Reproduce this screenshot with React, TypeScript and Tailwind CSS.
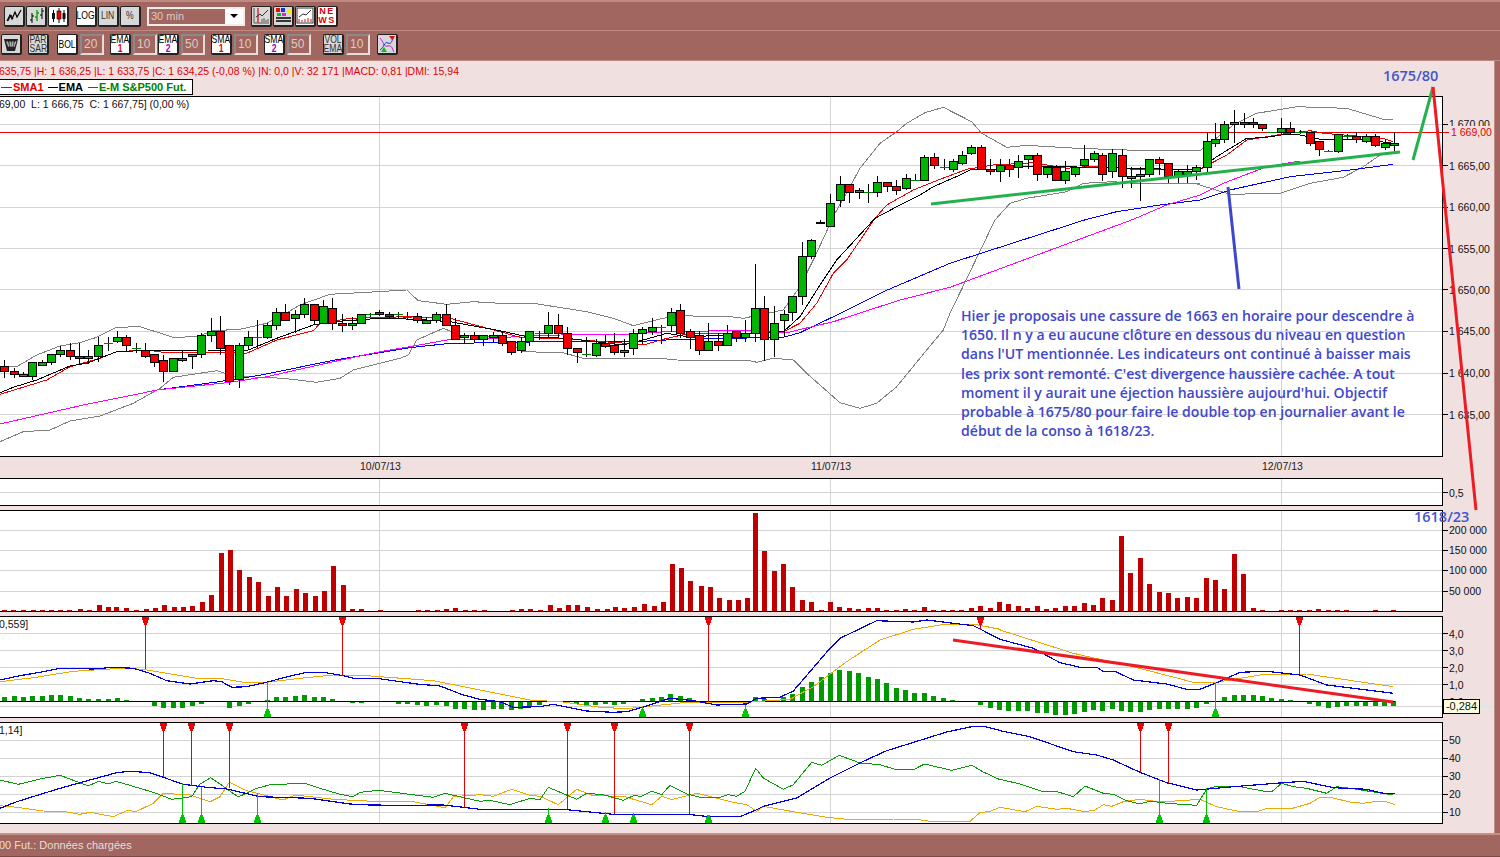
import React from "react";

type N = number[];
const pts = (a: N, xo: number, yo: number, sx = 3, sy = 3) => {
  const out: string[] = [];
  for (let i = 0; i < a.length; i += 2) out.push(`${(xo + a[i] / sx).toFixed(1)},${(yo + a[i + 1] / sy).toFixed(1)}`);
  return out.join(" ");
};
const join = (...s: string[]) => s.join(" ");

// candle data: zoom-x, body top, body bottom, high, low, green(1)/red(0)
const c3: N[] = [[13,259,274,240,293,0],[41,274,281,265,293,0],[69,281,287,275,292,1],[97,247,287,247,300,1],[125,247,254,240,254,1],[153,223,247,223,254,1],[181,211,223,197,231,1],[209,211,229,190,240,0],[237,229,235,188,253,0],[265,229,235,211,253,1],[295,196,229,170,247,1],[323,190,190,170,212,1],[350,172,184,153,190,1],[378,172,196,165,215,0],[407,205,205,190,218,1],[435,211,229,190,235,0],[463,223,247,223,260,0],[490,241,274,225,305,0],[520,235,274,235,274,1],[547,235,241,211,247,1],[575,223,229,223,266,1],[604,166,223,160,235,1],[632,154,166,115,185,1],[660,154,205,108,225,0],[688,196,304,196,316,0],[716,196,298,190,323,1],[745,172,196,153,207,1],[772,172,172,120,205,1],[802,136,172,130,178,1],[829,97,136,85,150,1],[856,97,121,72,121,0],[885,103,115,90,160,1],[913,73,103,55,115,1],[943,73,121,73,136,0],[970,79,130,61,133,1],[997,85,130,55,150,0],[1027,130,136,102,155,0],[1055,130,136,112,150,1],[1082,103,130,103,130,1],[1110,103,103,100,112,1],[1138,97,103,90,108,0],[1167,103,108,97,115,0],[1195,103,103,97,117,1],[1222,110,110,97,118,1],[1252,109,121,99,130,0],[1279,121,130,110,130,1],[1308,103,121,97,130,1],[1337,103,136,73,136,0],[1364,136,178,115,178,0],[1393,166,172,160,190,1],[1421,166,178,155,190,0],[1450,166,178,166,197,1],[1478,166,172,155,185,1]];
const c4: N[] = [[6,226,250,215,258,0],[34,244,277,244,285,0],[62,244,271,230,278,1],[88,214,244,214,258,1],[117,220,220,214,240,1],[145,196,220,156,234,1],[175,196,220,163,234,0],[202,220,265,202,285,0],[230,265,277,265,308,0],[259,283,283,232,292,1],[287,250,284,238,292,1],[315,250,257,226,265,0],[343,256,277,220,285,0],[371,271,277,238,291,1],[400,220,265,208,285,1],[427,208,220,202,252,1],[456,202,214,175,225,1],[484,202,202,196,252,1],[512,157,196,144,215,1],[541,151,220,132,235,0],[569,214,232,208,266,0],[598,226,271,214,285,0],[625,244,271,190,271,1],[653,244,256,220,272,0],[682,220,256,196,256,1],[709,214,232,214,245,0],[736,220,232,180,245,1],[766,145,220,12,245,1],[793,145,238,108,302,0],[823,190,238,139,292,1],[851,163,181,150,232,1],[877,109,157,109,183,1],[907,-12,109,-55,135,1],[934,-60,-12,-64,-3,1],[961,-114,-111,-120,-108,0],[990,-171,-102,-198,-102,1]];
const c5: N[] = [[119,283,331,258,350,1],[148,283,307,283,338,0],[176,301,307,295,326,1],[205,307,307,283,338,1],[232,277,307,258,320,1],[260,277,289,277,307,0],[289,289,301,271,314,0],[317,265,295,252,301,1],[345,271,271,252,271,1],[373,202,271,196,271,1],[401,202,226,190,238,0],[431,232,232,208,240,1],[458,214,238,208,245,1],[485,196,220,183,226,1],[514,172,190,166,196,1],[542,172,238,165,238,0],[571,238,244,208,255,0],[599,226,244,208,277,1],[627,226,238,208,260,0],[655,214,232,196,265,1],[683,196,208,196,238,1],[712,196,253,190,272,0],[740,232,253,232,265,1],[767,232,271,226,271,0],[796,244,271,214,283,1],[824,232,253,232,260,1],[853,208,226,166,232,1],[881,190,208,183,215,1],[907,196,253,190,272,0],[937,190,244,178,265,1],[965,196,259,178,295,0],[992,259,265,232,295,1],[1021,253,259,232,332,1],[1048,208,253,208,260,1],[1077,208,220,200,255,0],[1105,220,259,220,280,0],[1133,244,259,238,280,1],[1161,244,253,225,280,1],[1189,232,244,225,270,1]];
const c2: N[] = [[170,244,322,216,335,1],[196,238,250,190,262,1],[223,193,238,183,250,1],[253,187,193,150,250,1],[281,187,193,160,205,0],[310,187,193,175,205,0],[337,193,205,193,212,0],[367,217,217,217,217,1],[394,205,217,175,225,1],[421,205,217,187,225,0],[450,217,217,210,222,1],[479,217,250,217,257,0],[506,244,268,244,288,0],[535,274,274,270,276,1],[563,223,274,223,280,1],[591,229,229,223,238,1],[619,229,238,217,250,0],[647,229,244,223,250,1],[676,229,256,223,262,0],[704,250,262,238,270,1],[731,250,256,215,274,1]];

const toCandles = (a: N[], xo: number, yo: number) =>
  a.map(([x, t, b, h, l, g]) => ({ x: Math.round(xo + x / 3), t: Math.round(yo + t / 3) + 0.5, b: Math.round(yo + b / 3) + 0.5, h: yo + h / 3, l: yo + l / 3, g }));
const candles = [...toCandles(c3, 0, 280), ...toCandles(c4, 500, 260), ...toCandles(c5, 800, 90), ...toCandles(c2, 1150, 60)];

const bbU = join(
  pts([0,262,50,260,110,225,180,198,240,188,290,172,350,142,420,140,520,172,590,170,640,152,720,148,800,130,850,105,900,75,990,43,1100,37,1220,30,1255,62,1340,73,1420,65,1500,70], 0, 280),
  pts([100,130,260,155,340,175,400,197,490,175,530,167,690,170,730,175,850,150,900,80,940,0], 500, 260),
  pts([105,370,150,290,180,235,240,160,290,125,320,100,375,68,430,52,515,95,545,130,620,172,680,166,830,175,1070,183,1200,182], 800, 90),
  pts([250,195,320,160,440,140,590,145,700,178,730,178], 1150, 60));
const bbL = join(
  pts([0,485,70,455,150,450,210,423,300,408,400,370,480,325,520,292,650,272,700,288,850,295,950,307,1020,295,1060,270,1200,235,1225,225,1250,180,1330,145,1380,165,1500,170], 0, 280),
  pts([70,275,190,278,250,295,480,295,530,300,750,302,770,307,820,295,880,300,920,340,1020,428,1080,445,1130,430,1190,380,1280,270,1330,210,1350,160], 500, 260),
  pts([585,390,630,340,680,325,800,305,850,280,940,275,1000,280,1200,280], 800, 90),
  pts([140,372,240,403,390,400,480,370,580,352,640,320,690,285,730,280], 1150, 60));
const sma = join(
  pts([0,343,140,300,210,260,300,235,350,215,440,210,490,217,640,217,740,220,830,180,940,152,960,130,1050,115,1220,110,1350,115,1500,155], 0, 280),
  pts([60,232,220,238,310,245,380,250,430,255,490,238,560,222,740,220,850,215,900,190,950,130,1000,40,1040,0], 500, 260),
  pts([225,385,260,345,340,300,420,268,500,238,580,225,700,218,800,235,880,228,1000,238,1200,238], 800, 90),
  pts([230,285,290,240,400,222,480,212,520,220,700,235,730,245], 1150, 60));
const ema = join(
  pts([0,338,40,322,110,300,210,258,260,250,350,215,400,213,620,210,740,212,830,175,940,135,1000,125,1140,115,1250,118,1350,125,1500,152], 0, 280),
  pts([80,230,200,235,370,255,430,240,500,220,560,230,700,225,850,215,900,170,960,75,1010,0], 500, 260),
  pts([225,385,300,345,360,315,400,290,480,255,515,238,580,238,700,228,1000,235,1200,240], 800, 90),
  pts([160,320,200,290,290,235,340,233,400,224,450,225,520,240,630,238,730,250], 1150, 60));
const magenta = join(
  pts([0,432,250,375,400,345,470,330,680,308,800,290,1000,245,1140,215,1230,200,1340,180,1500,175], 0, 280),
  pts([60,228,220,224,390,222,520,214,740,212,860,218,1000,185,1200,120,1350,82], 500, 260),
  pts([1000,388,1100,345,1200,315], 800, 90),
  pts([220,370,350,320,450,303], 1150, 60));
const blue = join(
  pts([0,432,250,375,400,345,470,330,650,306,780,286,1000,241,1230,203,1350,190,1500,188], 0, 280),
  pts([130,245,400,245,540,238,850,232,900,218,1000,170,1150,95,1350,10], 500, 260),
  pts([860,388,950,365,1080,345,1200,330], 800, 90),
  pts([240,390,420,350,600,330,730,313], 1150, 60));

const macdB = join(
  pts([0,210,60,197,120,187,180,175,280,177,340,172,400,175,450,190,500,212,570,222,640,212,665,215,695,232,740,230,800,217,850,203,920,187,970,187,1030,197,1060,205,1130,205,1250,222,1320,228,1390,255], 0, 610),
  pts([0,268,60,275,100,292,180,290,220,283,320,303,400,307,440,305,500,288,570,265,640,272,710,285,800,282,830,265,900,262,940,243,1050,115,1080,85,1190,32,1300,36,1340,30,1480,47,1510,62], 480, 610),
  pts([0,88,100,115,180,158,240,172,290,172,310,184,345,184,400,210,500,222,560,238,600,238,650,218,720,187,800,184,900,195,980,225,1180,250], 1000, 610));
const macdY = join(
  pts([0,215,100,203,220,184,380,174,440,180,590,205,660,205,730,217,800,217,900,205,1000,195,1100,197,1300,212], 0, 610),
  pts([0,240,150,270,250,276,360,292,440,296,620,277,800,277,930,268,1000,230,1100,155,1200,90,1300,58,1400,42,1480,42,1560,58], 480, 610),
  pts([0,60,220,130,400,170,580,217,650,217,780,195,920,192,1180,230], 1000, 610));

const dmiB = join(
  pts([0,595,50,575,180,535,270,510,350,488,390,484,450,488,550,523,620,532,680,537,780,560,930,565,1050,582,1110,585,1200,586,1330,585,1390,592,1440,598], 0, 610),
  pts([0,274,250,274,340,283,400,289,620,289,690,296,780,296,830,275,850,265,950,240,1050,180,1150,130,1220,98,1400,42,1480,25,1510,25,1560,37], 480, 718),
  pts([0,362,90,380,220,425,290,435,340,450,420,487,500,518,590,540,700,530,850,518,910,514,1000,533,1100,538,1150,550,1185,550], 1000, 610));
const dmiG = join(
  pts([0,510,55,523,120,507,180,496,265,528,295,514,325,522,348,514,460,547,515,568,575,560,600,522,632,503,660,522,715,561,770,535,820,522,860,522,915,520,960,535,1020,553,1060,560,1080,547,1135,541,1300,562,1335,550,1400,565], 0, 610),
  pts([0,250,30,247,90,260,150,241,180,245,205,208,290,244,320,226,370,230,430,247,460,233,485,235,515,220,545,230,570,202,620,228,660,238,720,238,745,230,770,235,795,220,827,151,850,180,910,214,940,200,995,133,1025,142,1078,112,1140,135,1200,140,1245,154,1303,154,1333,138,1415,157,1475,142,1510,162,1560,185], 480, 718),
  pts([0,508,60,522,130,545,165,543,220,560,255,528,310,550,340,553,380,572,420,582,450,573,500,580,590,586,620,537,645,530,720,530,800,545,815,545,845,520,880,530,920,535,980,550,1010,530,1050,535,1180,555], 1000, 610));
const dmiY = join(
  pts([0,587,50,592,130,603,190,604,240,613,270,607,340,620,380,602,410,604,460,580,490,550,570,555,630,575,660,560,688,517,740,542,850,570,885,555,1000,568,1140,575,1240,575,1335,593,1360,560], 0, 610),
  pts([0,230,40,235,95,214,150,232,180,235,235,260,290,214,340,233,430,235,515,260,545,235,575,245,650,226,760,253,800,260,830,280,850,265,950,283,1040,298,1100,304,1180,306,1240,303,1310,304,1350,310,1470,310,1500,284,1530,280,1560,268], 480, 718),
  pts([0,592,75,605,110,589,170,598,200,595,255,605,285,600,310,584,335,589,370,575,420,568,480,576,600,568,650,590,720,605,770,605,800,595,870,597,930,580,960,562,990,562,1050,576,1090,580,1130,574,1155,574,1185,584], 1000, 610));

// volume [x px, top px]
const v8 = [9,315,28,315,47,315,68,315,87,315,107,315,126,315,145,315,166,312,185,315,206,300,225,306,243,306,264,309,284,315,304,312,323,309,342,300,363,306,381,306,400,303,421,291,440,270,461,144,480,135,498,195,519,216,538,231,559,273,578,246,597,273,618,252,637,264,657,273,676,258,695,183,716,240,735,312,753,312,793,315,873,315,891,315,912,315,931,312,950,309,971,315,990,315,1011,315,1069,315,1088,312,1107,312,1128,315,1147,300,1167,309,1186,300,1205,300,1226,306,1245,312,1266,312,1284,306,1303,309,1324,306,1343,297,1364,303,1383,291,1402,177,1422,189,1441,228,1462,243,1481,246,1500,279,1521,285,1540,285,1559,279];
const v9 = [46,24,73,138,103,198,130,177,157,246,187,285,214,291,244,315,271,291,298,306,328,309,355,312,385,309,412,309,439,315,469,315,496,312,523,315,553,306,580,315,610,315,637,315,664,315,694,309,721,303,751,309,778,291,805,297,835,303,862,309,892,303,919,312,946,309,976,303,1003,303,1033,294,1060,300,1087,279,1117,285,1144,93,1171,204,1201,159,1228,237,1258,261,1285,264,1312,279,1342,276,1369,279,1399,219,1426,225,1453,252,1483,147];
const v7 = [430,312,460,414,487,420,544,420,571,420,598,420,628,420,655,417,685,420,712,420,739,420,826,420,880,420];
const vols: { x: number; t: number }[] = [];
for (let i = 0; i < v8.length; i += 2) vols.push({ x: v8[i] / 2.087, t: 505 + v8[i + 1] / 3 });
for (let i = 0; i < v9.length; i += 2) vols.push({ x: 740 + v9[i] / 3, t: 505 + v9[i + 1] / 3 });
for (let i = 0; i < v7.length; i += 2) vols.push({ x: 1100 + v7[i] / 3, t: 470 + v7[i + 1] / 3 });

// MACD histogram [x px, end y px]
const h6 = [13,262,41,258,69,261,97,258,125,258,153,255,181,255,209,258,238,264,265,267,295,267,323,267,350,264,378,270,437,277,463,288,490,293,520,293,547,293,575,289,604,281,660,277,688,293,716,287,745,281,772,277,802,270,829,261,856,261,885,258,913,255,943,261,970,261,997,267,1055,279,1082,279,1110,277,1138,277,1167,277,1195,281,1222,281,1252,285,1279,288,1308,285,1337,288,1364,296,1393,296,1421,299];
const h10 = [10,299,38,296,64,296,94,299,121,296,148,290,178,284,262,277,289,281,319,284,346,284,376,281,403,284,430,281,487,267,517,264,544,261,571,252,601,258,628,264,826,261,853,267,910,262,937,252,967,231,994,216,1024,201,1051,189,1078,180,1108,183,1135,189,1165,201,1192,207,1219,219,1249,234,1276,240,1303,249,1333,249,1360,258,1390,264,1417,270,1501,284,1531,293,1558,299];
const h12 = [25,302,55,302,82,302,112,308,139,308,166,315,196,315,223,311,253,305,280,299,307,302,337,296,364,302,391,305,421,305,448,299,478,296,505,296,532,296,562,296,589,293,619,281,673,261,703,255,730,255,760,255,787,258,814,264,844,267,871,270,928,281,955,287,985,293,1012,290,1039,287,1069,287,1096,287,1126,287,1153,287,1180,287];
const hist: { x: number; e: number }[] = [];
const addH = (a: number[], xo: number) => { for (let i = 0; i < a.length; i += 2) hist.push({ x: xo + a[i] / 3, e: 610 + a[i + 1] / 3 }); };
addH(h6, 0); addH(h10, 480); addH(h12, 1000);

const Down = ({ x, top, end }: { x: number; top: number; end: number }) => (
  <g shapeRendering="crispEdges">
    <line x1={x + 0.5} x2={x + 0.5} y1={top} y2={end} stroke="#e60000" strokeWidth={1} />
    <polygon points={`${x - 3},${top} ${x + 4},${top} ${x + 4},${top + 2} ${x + 1.5},${top + 8} ${x - 0.5},${top + 8} ${x - 3},${top + 2}`} fill="#f00000" />
  </g>
);
const Up = ({ x, bot, start }: { x: number; bot: number; start: number }) => (
  <g shapeRendering="crispEdges">
    <line x1={x + 0.5} x2={x + 0.5} y1={start} y2={bot} stroke="#00c800" strokeWidth={1} />
    <polygon points={`${x - 3},${bot} ${x + 4},${bot} ${x + 4},${bot - 2} ${x + 1.5},${bot - 8} ${x - 0.5},${bot - 8} ${x - 3},${bot - 2}`} fill="#00c800" />
  </g>
);

const Line = ({ p, c, w = 1 }: { p: string; c: string; w?: number }) => (
  <polyline points={p} fill="none" stroke={c} strokeWidth={w} strokeLinejoin="round" shapeRendering="crispEdges" />
);

const grid = "#d3d3d3";
const VGrid = ({ top, bot }: { top: number; bot: number }) => (
  <g shapeRendering="crispEdges">
    {[379.5, 830.5, 1281.5].map((x) => (
      <line key={x} x1={x} x2={x} y1={top} y2={bot} stroke={grid} />
    ))}
  </g>
);
const HGrid = ({ ys }: { ys: number[] }) => (
  <g shapeRendering="crispEdges">
    {ys.map((y) => (
      <line key={y} x1={0} x2={1443} y1={y} y2={y} stroke={grid} strokeWidth={1} />
    ))}
  </g>
);

const Panel = ({ top, inner, labels, children, h }: { top: number; inner: number; h: string; labels: [number, string][]; children: React.ReactNode }) => (
  <div className={`flex shrink-0 ${h}`}>
    <div className="w-[1443px] h-full border-y border-r border-black bg-white">
      <svg className="block" width={1442} height={inner} viewBox={`0 ${top} 1442 ${inner}`} style={{ overflow: "hidden" }}>
        {children}
      </svg>
    </div>
    <svg className="block" width={51} height={inner + 2} viewBox={`1443 ${top - 1} 51 ${inner + 2}`}>
      {labels.map(([y, t]) => (
        <g key={t}>
          <line x1={1443} x2={1448} y1={y} y2={y} stroke="#000" shapeRendering="crispEdges" />
          <text x={1449} y={y + 4} fontSize={10.5} fontFamily="'Liberation Sans',sans-serif" fill="#111">{t}</text>
        </g>
      ))}
    </svg>
  </div>
);

const T = ({ children, cls }: { children: React.ReactNode; cls?: string }) => (
  <span className={`inline-block whitespace-nowrap scale-x-[0.78] text-[11px] leading-[9px] ${cls ?? ""}`}>{children}</span>
);
const Btn = ({ cls, white, children }: { cls?: string; white?: boolean; children?: React.ReactNode }) => (
  <div className={`w-[21px] h-[21px] shrink-0 rounded-[2px] border border-[#222] border-r-2 border-b-2 flex flex-col items-center justify-center overflow-hidden font-['Liberation_Sans',sans-serif] ${white ? "bg-white text-black" : "bg-[#d8d8d8] text-[#333]"} ${cls ?? ""}`}>
    {children}
  </div>
);
const Inp = ({ cls, v }: { cls?: string; v: string }) => (
  <div className={`w-[24px] h-[21px] shrink-0 border-2 border-t-[#8a8a8a] border-l-[#8a8a8a] border-r-[#e8dcd8] border-b-[#e8dcd8] bg-[#a1665f] text-[#dccbc6] text-[12px] leading-[17px] pl-[2px] font-['Liberation_Sans',sans-serif] ${cls ?? ""}`}>
    {v}
  </div>
);

export default function App() {
  return (
    <div className="relative w-[1500px] h-[857px] overflow-hidden bg-[#a1665f] flex flex-col font-['Liberation_Sans',sans-serif]">
      {/* toolbar 1 */}
      <div className="h-[31px] shrink-0 flex items-center pl-[4px] border-t-2 border-t-[#c08a82] border-b border-b-[#c08a82]">
        <Btn>
          <svg width="17" height="15" viewBox="0 0 17 15"><path d="M1 13 L4 7 L6 11 L9 4 L11 9 L15 2" fill="none" stroke="#000" strokeWidth="1.2" /><path d="M2 13 L5 7 L7 11" fill="none" stroke="#000" strokeWidth="1" /></svg>
        </Btn>
        <Btn cls="ml-[1px]">
          <svg width="17" height="17" viewBox="0 0 17 17"><path d="M4 6v10M4 13H2M4 9h2" stroke="#000" fill="none" /><path d="M9 3v11M9 10H7M9 6h2" stroke="#0a0" strokeWidth="1.4" fill="none" /><path d="M14 1v11M14 8h-2M14 4h2" stroke="#000" fill="none" /></svg>
        </Btn>
        <Btn white cls="ml-[1px]">
          <svg width="17" height="17" viewBox="0 0 17 17"><path d="M3.5 3v12M9 1v15M14 3v12" stroke="#000" /><rect x="2" y="6" width="3" height="6" fill="#111" /><rect x="7" y="4" width="4" height="8" fill="#e00" stroke="#000" strokeWidth=".6" /><rect x="12.5" y="6" width="3" height="6" fill="#111" /></svg>
        </Btn>
        <Btn white cls="ml-[7px]"><T>LOG</T></Btn>
        <Btn cls="ml-[1px]"><T>LIN</T></Btn>
        <Btn cls="ml-[1px]"><T>%</T></Btn>
        <div className="ml-[6px] w-[98px] h-[19px] flex border-2 border-[#f2ecea] bg-[#a1665f]">
          <span className="flex-1 text-[#dccbc6] text-[11px] leading-[15px] pl-[2px]">30 min</span>
          <span className="w-[18px] bg-white flex items-center justify-center"><span className="w-0 h-0 border-x-[4px] border-x-transparent border-t-[4px] border-t-black" /></span>
        </div>
        <Btn cls="ml-[6px]">
          <svg width="17" height="17" viewBox="0 0 17 17"><path d="M1 1v15h15" stroke="#555" fill="none" /><path d="M5 1v15" stroke="#d22" strokeWidth="1.4" /><path d="M3 10l4-3 2 2 6-6" stroke="#333" fill="none" /><path d="M9 15v-3M11 15v-4M13 15v-2M15 15v-3" stroke="#555" /></svg>
        </Btn>
        <Btn cls="ml-[1px]">
          <svg width="17" height="17" viewBox="0 0 17 17"><rect x="1" y="1" width="4" height="4" fill="#e01010" /><rect x="6" y="1" width="4" height="4" fill="#2030e0" /><rect x="12" y="2" width="4" height="4" fill="#f0f000" /><rect x="2" y="6" width="4" height="3" fill="#10c010" /><rect x="7" y="6" width="4" height="3" fill="#e020e0" /><path d="M1 11h15M1 14h15" stroke="#000" strokeWidth="1.5" /></svg>
        </Btn>
        <Btn white cls="ml-[1px]">
          <svg width="18" height="17" viewBox="0 0 18 17"><rect x="1" y="1" width="16" height="15" fill="#fff" stroke="#333" /><path d="M3 10l4-3 3 1 5-5" stroke="#333" fill="none" /><path d="M3 15v-3M6 15v-2M9 15v-3M12 15v-4M15 15v-3" stroke="#e00" /></svg>
        </Btn>
        <Btn white cls="ml-[1px]">
          <span className="text-[#e00000] text-[9px] leading-[9px] font-bold tracking-[1.5px] whitespace-nowrap">NE</span>
          <span className="text-[#e00000] text-[9px] leading-[9px] font-bold tracking-[1.5px] whitespace-nowrap">WS</span>
        </Btn>
      </div>
      {/* toolbar 2 */}
      <div className="h-[30px] shrink-0 flex items-start pt-[3px] pl-[1px] border-b border-b-[#c08a82]">
        <Btn>
          <svg width="16" height="16" viewBox="0 0 16 16"><path d="M1 3h14l-3 12H4z" fill="#222" /><path d="M4 5l2 6M7 5l1 6M10 5l-1 6M13 5l-2 6M3 7h10M4 9h8" stroke="#ddd" strokeWidth=".7" /></svg>
        </Btn>
        <Btn cls="ml-[6px]"><T>PAR</T><T>SAR</T></Btn>
        <Btn white cls="ml-[8px]"><T>BOL</T></Btn>
        <Inp cls="ml-[2px]" v="20" />
        <Btn white cls="ml-[6px]"><T>EMA</T><T cls="text-[#e00000] font-bold">1</T></Btn>
        <Inp cls="ml-[2px]" v="10" />
        <Btn white cls="ml-[1px]"><T>EMA</T><T cls="text-[#a000c0] font-bold">2</T></Btn>
        <Inp cls="ml-[2px]" v="50" />
        <Btn white cls="ml-[6px]"><T>SMA</T><T cls="text-[#e00000] font-bold">1</T></Btn>
        <Inp cls="ml-[2px]" v="10" />
        <Btn white cls="ml-[6px]"><T>SMA</T><T cls="text-[#a000c0] font-bold">2</T></Btn>
        <Inp cls="ml-[2px]" v="50" />
        <Btn cls="ml-[12px]"><T>VOL</T><T>EMA</T></Btn>
        <Inp cls="ml-[2px]" v="10" />
        <Btn cls="ml-[7px]">
          <svg width="18" height="18" viewBox="0 0 18 18"><path d="M2 3c4 4 3 9 8 8s4 4 6 6" stroke="#c020e0" fill="none" /><path d="M2 15c4-2 4-9 8-7s4-4 6-6" stroke="#2030e0" fill="none" /><polygon points="11,1 17,1 14,5" fill="#e01010" /><polygon points="3,17 9,17 6,12" fill="#10c010" /></svg>
        </Btn>
      </div>
      {/* chart area */}
      <div className="w-[1495px] h-[772px] shrink-0 bg-[#f0e0e0] border-r border-r-[#c08a82] flex flex-col overflow-hidden">
        <div className="h-[35px] shrink-0 flex flex-col">
          <div className="h-[18px] shrink-0 text-[10.5px] leading-[21px] text-[#e00000] whitespace-nowrap -ml-[1px]">
            635,75 |H: 1 636,25 |L: 1 633,75 |C: 1 634,25 (-0,08 %) |N: 0,0 |V: 32 171 |MACD: 0,81 |DMI: 15,94
          </div>
          <div className="w-[193px] h-[16px] border border-l-0 border-black bg-white flex items-center text-[11px] leading-[14px] font-bold whitespace-nowrap">
            <span className="w-[11px] shrink-0 h-px bg-[#e00000] ml-[1px]" />
            <span className="shrink-0 text-[#e00000] ml-px">SMA1</span>
            <span className="w-[10px] shrink-0 h-px bg-black ml-[4px]" />
            <span className="shrink-0 text-black ml-px">EMA</span>
            <span className="w-[10px] shrink-0 h-px bg-[#008000] ml-[5px]" />
            <span className="shrink-0 text-[#008000] ml-px">E-M S&amp;P500 Fut.</span>
          </div>
        </div>
        <Panel top={97} inner={359} h="h-[361px]" labels={[[124, "1 670,00"], [165.5, "1 665,00"], [207, "1 660,00"], [248.5, "1 655,00"], [289.5, "1 650,00"], [331, "1 645,00"], [373, "1 640,00"], [414.5, "1 635,00"]]}>
          <HGrid ys={[124, 165.5, 207, 248.5, 289.5, 331, 373, 414.5]} />
          <VGrid top={96} bot={458} />
          <g shapeRendering="crispEdges">
            <line x1={0} x2={1442} y1={132.5} y2={132.5} stroke="#f00000" />
          </g>
          <Line p={bbU} c="#808080" />
          <Line p={bbL} c="#808080" />
          <Line p={blue} c="#0000f0" />
          <Line p={magenta} c="#ff00ff" />
          <Line p={sma} c="#f00000" />
          <Line p={ema} c="#000" />
          <g shapeRendering="crispEdges">
            {candles.map((c, i) =>
              c.t === c.b ? (
                <g key={i}>
                  <line x1={c.x + 0.5} x2={c.x + 0.5} y1={c.h} y2={c.l} stroke="#000" />
                  <line x1={c.x - 4} x2={c.x + 5} y1={c.t} y2={c.t} stroke="#008000" />
                </g>
              ) : (
                <g key={i}>
                  <line x1={c.x + 0.5} x2={c.x + 0.5} y1={c.h} y2={c.l} stroke="#000" />
                  <rect x={c.x - 3.5} y={c.t} width={8} height={c.b - c.t} fill={c.g ? "#00b400" : "#f00000"} stroke="#000" />
                </g>
              )
            )}
          </g>
          <text x={-1} y={108} fontSize={10.5} fontFamily="'Liberation Sans',sans-serif" fill="#111" xmlSpace="preserve">69,00  L: 1 666,75  C: 1 667,75] (0,00 %)</text>
        </Panel>
        <div className="h-[21px] shrink-0 w-[1443px] relative text-[10.5px] leading-[19px] text-[#222]">
          <span className="absolute left-[360px] top-0">10/07/13</span>
          <span className="absolute left-[811px] top-0">11/07/13</span>
          <span className="absolute left-[1262px] top-0">12/07/13</span>
        </div>
        <Panel top={479} inner={26} h="h-[28px]" labels={[[492.5, "0,5"]]}>
          <HGrid ys={[492.5]} />
          <VGrid top={478} bot={506} />
        </Panel>
        <div className="h-[4px] shrink-0" />
        <Panel top={511} inner={100} h="h-[102px]" labels={[[530, "200 000"], [550, "150 000"], [570, "100 000"], [591, "50 000"]]}>
          <HGrid ys={[530, 550, 570, 591]} />
          <VGrid top={510} bot={612} />
          <g shapeRendering="crispEdges">
            {vols.map((v, i) => (
              <rect key={i} x={Math.round(v.x) - 2} y={v.t} width={5} height={Math.max(611 - v.t, 0)} fill="#c00000" />
            ))}
          </g>
        </Panel>
        <div className="h-[4px] shrink-0" />
        <Panel top={617} inner={100} h="h-[102px]" labels={[[633.5, "4,0"], [650.5, "3,0"], [667.5, "2,0"], [684.5, "1,0"], [701.5, "0,0"]]}>
          <HGrid ys={[633.5, 650.5, 667.5, 684.5, 706.5]} />
          <VGrid top={616} bot={718} />
          <g shapeRendering="crispEdges">
            {hist.map((b, i) => {
              const y0 = Math.min(b.e, 701), y1 = Math.max(b.e, 701);
              return <rect key={i} x={Math.round(b.x) - 2} y={y0} width={5} height={y1 - y0} fill="#009900" />;
            })}
            <line x1={0} x2={1395} y1={701.5} y2={701.5} stroke="#000" />
          </g>
          <Line p={macdY} c="#f0a800" />
          <Line p={macdB} c="#0000d8" w={1.2} />
          <Down x={145} top={617} end={669} />
          <Down x={342} top={617} end={676} />
          <Down x={708} top={617} end={702} />
          <Down x={980} top={617} end={630} />
          <Down x={1299} top={617} end={674} />
          <Up x={267} bot={717} start={682} />
          <Up x={642} bot={717} start={707} />
          <Up x={745} bot={717} start={705} />
          <Up x={1215} bot={717} start={683} />
          <text x={-1} y={628} fontSize={10.5} fontFamily="'Liberation Sans',sans-serif" fill="#111">0,559]</text>
        </Panel>
        <div className="h-[4px] shrink-0" />
        <Panel top={723} inner={100} h="h-[102px]" labels={[[740, "50"], [758, "40"], [776, "30"], [794, "20"], [812, "10"]]}>
          <HGrid ys={[740, 758, 776, 794, 812]} />
          <VGrid top={722} bot={825} />
          <Line p={dmiY} c="#f0a800" />
          <Line p={dmiG} c="#089808" />
          <Line p={dmiB} c="#0000d8" w={1.2} />
          {[[163, 777], [191, 786], [229, 788], [464, 807], [567, 809], [614, 814], [689, 814], [1140, 772], [1168, 783]].map(([x, e]) => (
            <Down key={x} x={x} top={723} end={e} />
          ))}
          {[[182, 783], [201, 787], [257, 793], [548, 808], [605, 812], [633, 813], [708, 815], [1159, 779], [1206, 788]].map(([x, s]) => (
            <Up key={x} x={x} bot={823} start={s} />
          ))}
          <text x={-1} y={734} fontSize={10.5} fontFamily="'Liberation Sans',sans-serif" fill="#111">1,14]</text>
        </Panel>
      </div>
      {/* status bar */}
      <div className="flex-1 border-t-2 border-t-[#c98f86] border-b border-b-[#7a4a45] text-[11px] leading-[20px] text-[#ecdcd8] whitespace-nowrap -ml-[1px]">
        00 Fut.: Données chargées
      </div>

      {/* hand-drawn annotations over the chart */}
      <svg className="absolute left-0 top-0 pointer-events-none" width={1500} height={857} viewBox="0 0 1500 857">
        <rect x={1449} y={126} width={44} height={13} fill="#f0e0e0" />
        <line x1={1443} x2={1449} y1={132.5} y2={132.5} stroke="#f00000" shapeRendering="crispEdges" />
        <text x={1451} y={136} fontSize={10.5} fontFamily="'Liberation Sans',sans-serif" fill="#e00000">1 669,00</text>
        <line x1={931} y1={204} x2={1400} y2={152} stroke="#22b14c" strokeWidth={3} />
        <line x1={1228} y1={187} x2={1239} y2={289} stroke="#3f48cc" strokeWidth={3} />
        <line x1={1413} y1={160} x2={1433} y2={87} stroke="#22b14c" strokeWidth={3} />
        <line x1={1433} y1={87} x2={1476} y2={510} stroke="#ed1c24" strokeWidth={3} />
        <line x1={953} y1={640} x2={1393} y2={702} stroke="#ed1c24" strokeWidth={3} />
      </svg>
      <div className="absolute left-[1383px] top-[66px] text-[14.5px] leading-[20px] font-semibold text-[#4355cc] font-['Open_Sans',sans-serif]">1675/80</div>
      <div className="absolute left-[1414px] top-[507px] text-[14.5px] leading-[20px] font-semibold text-[#4355cc] font-['Open_Sans',sans-serif]">1618/23</div>
      <div className="absolute left-[961px] top-[306px] w-[480px] text-[14.1px] leading-[19.2px] font-semibold text-[#3f48cc] font-['Open_Sans',sans-serif] whitespace-pre-line">
        {"Hier je proposais une cassure de 1663 en horaire pour descendre à\n1650. Il n y a eu aucune clôture en dessous du niveau en question\ndans l'UT mentionnée. Les indicateurs ont continué à baisser mais\nles prix sont remonté. C'est divergence haussière cachée. A tout\nmoment il y aurait une éjection haussière aujourd'hui. Objectif\nprobable à 1675/80 pour faire le double top en journalier avant le\ndébut de la conso à 1618/23."}
      </div>
      <div className="absolute left-[1443px] top-[699px] w-[37px] h-[15px] bg-[#ffffe1] border border-black text-[11px] leading-[13px] text-center text-[#111]">-0,284</div>
      <div className="absolute left-[1480px] top-[706px] w-[13px] h-px bg-[#d0e8e8]" />
    </div>
  );
}
